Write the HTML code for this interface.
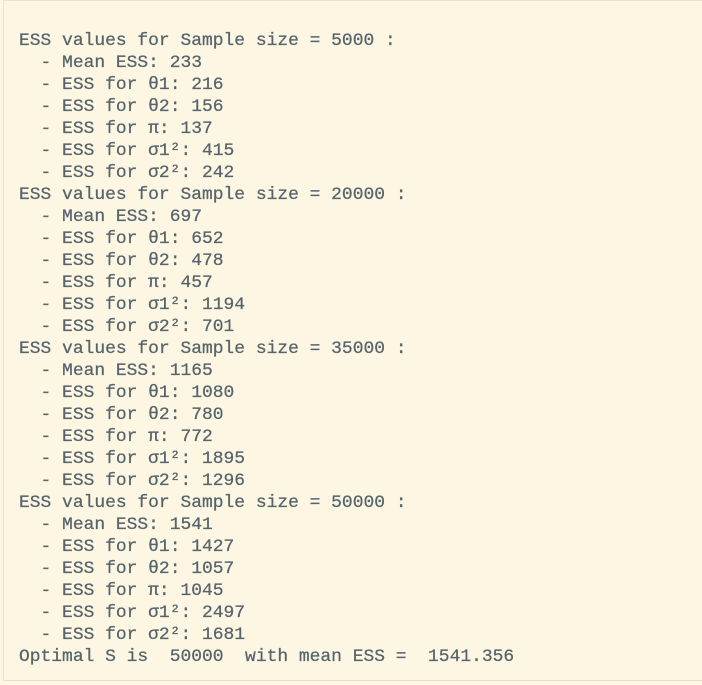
<!DOCTYPE html>
<html><head><meta charset="utf-8"><style>
html,body{margin:0;padding:0;background:#fdf6e3;}
body{width:702px;height:685px;position:relative;overflow:hidden;}
.box{position:absolute;left:3px;top:0;width:699px;height:679px;border-left:1px solid #eee3c8;border-top:1px solid #eee3c8;border-bottom:1px solid #e6dcc3;background:#fdf6e3;}
pre{position:absolute;left:19px;top:30px;margin:0;font-family:"Liberation Mono","DejaVu Sans Mono",monospace;font-size:17.95px;line-height:22px;color:#56656c;-webkit-text-stroke:0.25px #56656c;}
</style></head><body><div class="box"></div>
<pre>ESS values for Sample size = 5000 :
  - Mean ESS: 233
  - ESS for θ1: 216
  - ESS for θ2: 156
  - ESS for π: 137
  - ESS for σ1²: 415
  - ESS for σ2²: 242
ESS values for Sample size = 20000 :
  - Mean ESS: 697
  - ESS for θ1: 652
  - ESS for θ2: 478
  - ESS for π: 457
  - ESS for σ1²: 1194
  - ESS for σ2²: 701
ESS values for Sample size = 35000 :
  - Mean ESS: 1165
  - ESS for θ1: 1080
  - ESS for θ2: 780
  - ESS for π: 772
  - ESS for σ1²: 1895
  - ESS for σ2²: 1296
ESS values for Sample size = 50000 :
  - Mean ESS: 1541
  - ESS for θ1: 1427
  - ESS for θ2: 1057
  - ESS for π: 1045
  - ESS for σ1²: 2497
  - ESS for σ2²: 1681
Optimal S is  50000  with mean ESS =  1541.356</pre>
</body></html>
